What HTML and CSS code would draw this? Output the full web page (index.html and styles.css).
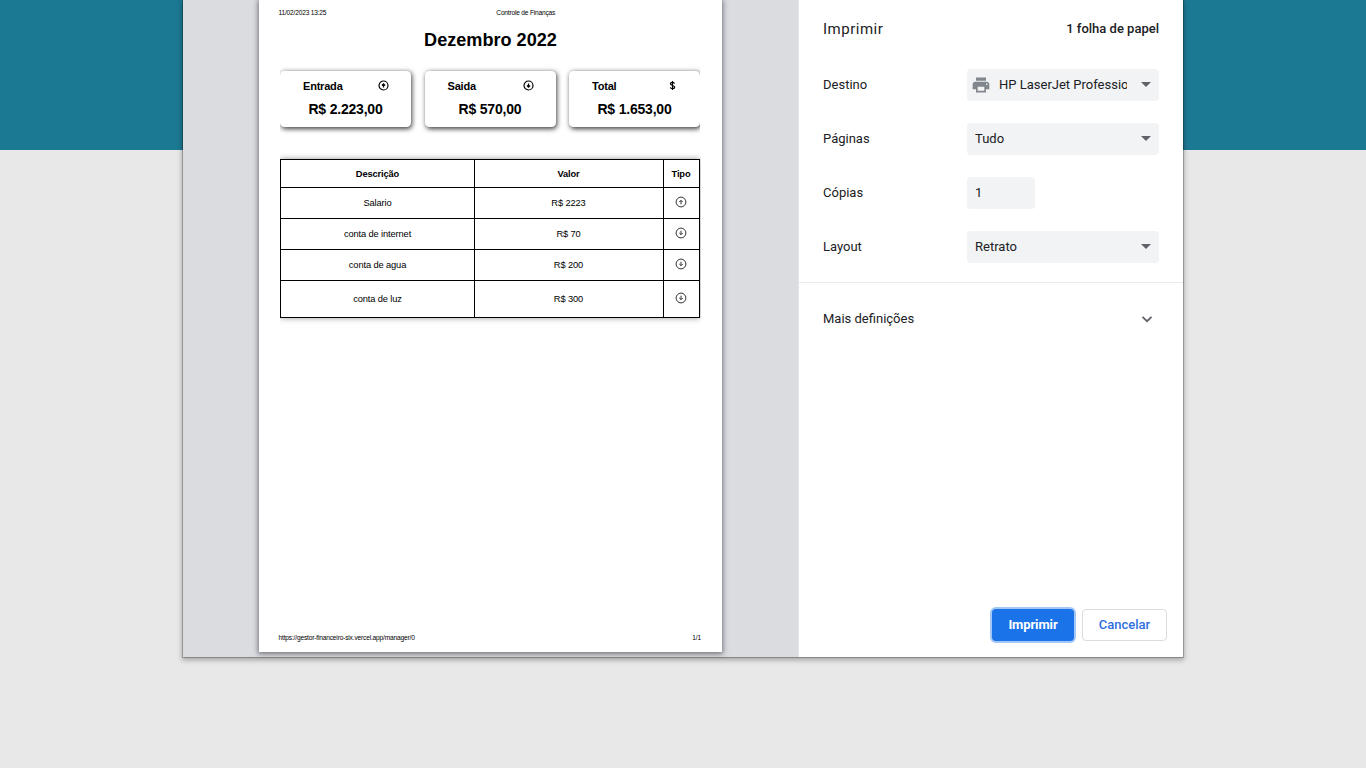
FILE: index.html
```html
<!DOCTYPE html>
<html lang="pt">
<head>
<meta charset="utf-8">
<title>Controle de Finanças</title>
<link rel="stylesheet" href="styles.css">
</head>
<body>
<svg class="defs" width="0" height="0" aria-hidden="true">
  <symbol id="up" viewBox="0 0 12 12"><circle cx="6" cy="6" r="4.9"/><path d="M6 8.300V4.500M4.300 6 6 4.300l1.700 1.700"/></symbol>
  <symbol id="down" viewBox="0 0 12 12"><circle cx="6" cy="6" r="4.9"/><path d="M6 3.700V7.500M4.300 6 6 7.700l1.700-1.700"/></symbol>
</svg>
<div class="banner">
<main class="dialog">
  <section class="preview">
    <article class="paper">
      <header class="paper-head"><span>11/02/2023 13:25</span><span class="doc-title">Controle de Finanças</span></header>
      <h1>Dezembro 2022</h1>
      <div class="cards">
        <div class="card"><div class="card-top"><span>Entrada</span><svg><use href="#up"/></svg></div><strong>R$ 2.223,00</strong></div>
        <div class="card"><div class="card-top"><span>Saida</span><svg><use href="#down"/></svg></div><strong>R$ 570,00</strong></div>
        <div class="card"><div class="card-top"><span>Total</span><svg viewBox="0 0 12 12"><path d="M6 1v10M8.200 3.900C7.700 2.200 3.700 2.200 3.700 4.200S8.400 5.900 8.400 7.900 4.100 10 3.600 8"/></svg></div><strong>R$ 1.653,00</strong></div>
      </div>
      <div class="table-wrap">
      <table>
        <tr class="r-head"><th class="c1">Descrição</th><th class="c2">Valor</th><th class="c3">Tipo</th></tr>
        <tr><td>Salario</td><td>R$ 2223</td><td><svg><use href="#up"/></svg></td></tr>
        <tr><td>conta de internet</td><td>R$ 70</td><td><svg><use href="#down"/></svg></td></tr>
        <tr><td>conta de agua</td><td>R$ 200</td><td><svg><use href="#down"/></svg></td></tr>
        <tr class="r-last"><td>conta de luz</td><td>R$ 300</td><td><svg><use href="#down"/></svg></td></tr>
      </table>
      </div>
      <footer class="paper-foot"><span>https://gestor-financeiro-six.vercel.app/manager/0</span><span>1/1</span></footer>
    </article>
  </section>
  <aside class="panel">
    <div class="panel-head"><span class="panel-title">Imprimir</span><span class="sheets">1 folha de papel</span></div>
    <div class="settings">
      <div class="row"><label>Destino</label><div class="select"><svg class="printer" viewBox="0 0 24 24"><path d="M19 8H5c-1.660 0-3 1.340-3 3v6h4v4h12v-4h4v-6c0-1.660-1.340-3-3-3zm-3 11H8v-5h8v5zm3-7c-.55 0-1-.45-1-1s.45-1 1-1 1 .45 1 1-.45 1-1 1zm-1-9H6v4h12V3z"/></svg><span class="dest">HP LaserJet Professio</span><i class="caret"></i></div></div>
      <div class="row"><label>Páginas</label><div class="select"><span>Tudo</span><i class="caret"></i></div></div>
      <div class="row"><label>Cópias</label><div class="select copies"><span>1</span></div></div>
      <div class="row"><label>Layout</label><div class="select"><span>Retrato</span><i class="caret"></i></div></div>
    </div>
    <div class="more"><span>Mais definições</span><svg viewBox="0 0 12 12"><path d="M1.500 3.800 6 8.200l4.500-4.400"/></svg></div>
    <div class="actions"><button class="primary">Imprimir</button><button class="cancel">Cancelar</button></div>
  </aside>
</main>
</div>
</body>
</html>
```
FILE: styles.css
```css
* { box-sizing: border-box; }
body { margin: 0; height: 768px; background: #e8e8e8; overflow: hidden; font-family: Roboto, sans-serif; }
.defs { display: block; height: 0; }
.banner { height: 150px; background: #1c7993; }
.dialog { width: 1000px; height: 657px; margin: 0 auto; display: flex; background: #fff; box-shadow: 0 0 0 1px rgba(0,0,0,.22), 0 2px 5px 1px rgba(0,0,0,.3); }
.preview { width: 616px; flex: none; padding-left: 76px; background: #dadce0; border-right: 1px solid #e4e5e8; }
.paper { width: 463px; height: 652px; background: #fff; box-shadow: 0 1px 5px 1px rgba(60,62,70,.65); font-family: "Liberation Sans", Arial, sans-serif; color: #000; display: flex; flex-direction: column; }
.paper-head { display: flex; padding: 9px 20px 0 19.500px; font-size: 6.600px; letter-spacing: -.19px; line-height: 8px; height: 17px; }
.doc-title { margin-left: 170px; }
h1 { margin: 11px 0 0; text-align: center; font-size: 18.100px; line-height: 24px; }
.cards { display: flex; gap: 13.500px; margin: 9px 22px 0 21px; height: 78px; padding: 10px 0 12px; overflow: hidden; }
.card { flex: 1; background: #fff; border-radius: 4.500px; box-shadow: 1px 1.500px 5px rgba(0,0,0,.75); text-align: center; padding: 8px 0 0; }
.card-top { display: flex; justify-content: space-between; align-items: center; padding: 0 22px 0 23px; height: 13px; font-size: 11px; letter-spacing: -.2px; font-weight: bold; }
.card-top svg { width: 11px; height: 11px; stroke-width: 1.300; }
.card strong { display: block; font-size: 14px; letter-spacing: -.2px; line-height: 16px; margin-top: 9px; }
svg { fill: none; stroke: #000; stroke-width: 1; }
.table-wrap { margin: 13px 21px 0; padding: 7px 0 10px; overflow: hidden; flex: none; }
table { width: 420px; border-collapse: collapse; table-layout: fixed; font-size: 9.300px; letter-spacing: -.12px; box-shadow: 0 0 6px rgba(0,0,0,.4); }
th, td { border: 1px solid #000; padding: 0; text-align: center; vertical-align: middle; line-height: 12px; }
tr > :nth-child(n+2) { padding-right: 1px; }
tr { height: 31px; }
.r-head { height: 28px; }
.r-last { height: 37px; }
.c1 { width: 194px; }
.c2 { width: 189px; }
.c3 { width: 36px; }
td svg { display: block; width: 12px; height: 12px; margin: -2px auto 0; stroke: #333; }
.paper-foot { margin-top: auto; padding: 0 21px 10px 19.500px; display: flex; justify-content: space-between; font-size: 6.600px; letter-spacing: -.17px; line-height: 8px; }
.panel { flex: 1; display: flex; flex-direction: column; color: #202124; font-size: 13px; }
.panel-head { display: flex; justify-content: space-between; align-items: center; padding: 0 24px; height: 58px; }
.panel-title { font-size: 15px; letter-spacing: .5px; }
.sheets { font-weight: 500; margin-top: -2px; }
.settings { padding: 0 24px; height: 225px; border-bottom: 1px solid #e8eaed; }
.row { height: 54px; display: flex; align-items: center; justify-content: space-between; }
.row label { width: 144px; padding-bottom: 2px; }
.select { flex: 1; height: 32px; display: flex; align-items: center; background: #f1f3f4; border-radius: 4px; padding: 0 8px; }
.select span { padding-bottom: 2px; }
.copies { flex: none; width: 68px; margin-right: auto; }
.printer { width: 20px; height: 20px; flex: none; margin: 0 8px 0 -4px; fill: #80868b; stroke: none; }
.dest { width: 128px; overflow: hidden; white-space: nowrap; }
.caret { margin-left: auto; border: 5px solid transparent; border-top-color: #5f6368; border-bottom: 0; margin-top: -1px; }
.more { display: flex; justify-content: space-between; align-items: center; padding: 0 30px 0 24px; height: 72px; }
.more span { padding-bottom: 2px; }
.more svg { width: 12px; height: 12px; stroke: #5f6368; stroke-width: 1.800; }
.actions { margin-top: auto; padding: 0 16px 16px; display: flex; justify-content: flex-end; gap: 8px; }
button { height: 32px; padding: 0 0 2px; border-radius: 4px; font: 500 13px Roboto, sans-serif; }
.primary { width: 82px; background: #1a73e8; color: #fff; border: 0; box-shadow: 0 0 0 2px #a3c7f6; font-weight: 700; letter-spacing: -.1px; }
.cancel { width: 85px; background: #fff; color: #2f6fe0; border: 1px solid #dadce0; }
```
